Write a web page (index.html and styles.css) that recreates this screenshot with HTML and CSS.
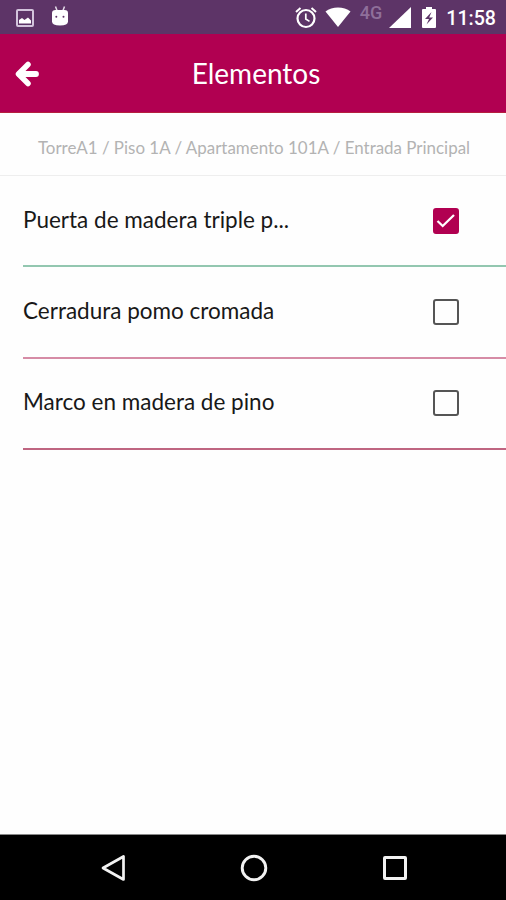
FILE: index.html
```
<!DOCTYPE html>
<html lang="es">
<head>
    <meta charset="UTF-8">
    <meta name="viewport" content="width=device-width, initial-scale=1.0">
    <title>Elementos</title>
    <link rel="stylesheet" href="styles.css">
</head>
<body>
    <div class="status-bar">
        <div class="notifications">
            <svg class="icon-picture" width="18" height="18" viewBox="0 0 18 18">
                <rect x="1" y="1" width="16" height="16" rx="1" fill="none" stroke="#d3c4dc" stroke-width="2"/>
                <path d="M3 14.500V11l3-2 2.500 2L12 8.500l3 3v3z" fill="#fff"/>
            </svg>
            <svg class="icon-android" width="18" height="20" viewBox="0 0 18 20">
                <path d="M4.500 0.500l1.500 4M13.500 0.500l-1.500 4" stroke="#e4dbe9" stroke-width="1.500"/>
                <path d="M1 7Q1 4 4.500 4h9Q17 4 17 7v8.500Q17 19.500 9 19.500T1 15.500z" fill="#fff"/>
                <circle cx="5.300" cy="10.800" r="1" fill="#5d3467"/>
                <circle cx="12.500" cy="10.800" r="1" fill="#5d3467"/>
            </svg>
        </div>
        <div class="system">
            <svg class="icon-alarm" width="22" height="22" viewBox="0 0 22 22" fill="none" stroke="#fff">
                <circle cx="11" cy="11.500" r="8.500" stroke-width="2.200"/>
                <path d="M1 5l4.500-4M21 5l-4.500-4" stroke-width="2"/>
                <path d="M10.800 6.500V12l3.700 2.400" stroke-width="1.700"/>
            </svg>
            <svg class="icon-wifi" width="26" height="20" viewBox="0 0 26 20">
                <path d="M0.500 4.500C7-1 19-1 25.500 4.500L13 20z" fill="#fff"/>
            </svg>
            <span class="network">4G</span>
            <svg class="icon-signal" width="22" height="21" viewBox="0 0 22 21">
                <path d="M22 0v21H0z" fill="#fff"/>
            </svg>
            <svg class="icon-battery" width="14" height="21" viewBox="0 0 14 21">
                <path d="M4 0h6v2H13q1 0 1 1v17q0 1-1 1H1q-1 0-1-1V3q0-1 1-1h3z" fill="#fff"/>
                <path d="M9.500 5L3 12h4L4.500 17.500 11 10.500H7.200z" fill="#5d3467"/>
            </svg>
            <span class="clock">11:58</span>
        </div>
    </div>

    <header>
        <a href="#" class="back">
            <svg width="24" height="26" viewBox="0 0 24 26" fill="none" stroke="#fff" stroke-linecap="round" stroke-linejoin="round">
                <path d="M13 3.500L3.500 13l9.500 9.500" stroke-width="5.500"/>
                <path d="M4.500 13h16.500" stroke-width="5.800"/>
            </svg>
        </a>
        <h1>Elementos</h1>
    </header>

    <div class="breadcrumb">TorreA1 / Piso 1A / Apartamento 101A / Entrada Principal</div>

    <ul class="item-list">
        <li class="item done">
            <span class="item-name">Puerta de madera triple p...</span>
            <span class="checkbox checked">
                <svg width="20" height="16" viewBox="0 0 20 16">
                    <path d="M1.500 8l5.200 5L18 2" fill="none" stroke="#fff" stroke-width="2.300"/>
                </svg>
            </span>
        </li>
        <li class="item pending">
            <span class="item-name">Cerradura pomo cromada</span>
            <span class="checkbox"></span>
        </li>
        <li class="item last">
            <span class="item-name">Marco en madera de pino</span>
            <span class="checkbox"></span>
        </li>
    </ul>

    <nav class="nav-bar">
        <svg width="26" height="28" viewBox="0 0 26 28">
            <path d="M23.500 2.500v23L3 14z" fill="none" stroke="#f2f2f2" stroke-width="2.700" stroke-linejoin="round"/>
        </svg>
        <svg width="28" height="28" viewBox="0 0 28 28">
            <circle cx="14" cy="14" r="11.800" fill="none" stroke="#f2f2f2" stroke-width="2.900"/>
        </svg>
        <svg width="26" height="26" viewBox="0 0 26 26">
            <rect x="2.500" y="2.500" width="21" height="21" rx="0.500" fill="none" stroke="#f2f2f2" stroke-width="3"/>
        </svg>
    </nav>
</body>
</html>
```
FILE: styles.css
```
* {
    margin: 0;
    padding: 0;
    box-sizing: border-box;
}

body {
    display: flex;
    flex-direction: column;
    height: 100vh;
    background: #fefefe;
    color: #181818;
    font-family: Lato, sans-serif;
    overflow: hidden;
}

svg {
    display: block;
    flex-shrink: 0;
}

/* status bar */
.status-bar {
    display: flex;
    justify-content: space-between;
    height: 34px;
    padding: 0 10px 0 16px;
    background: #5d3467;
    color: #fff;
    font-family: Roboto, sans-serif;
}

.notifications,
.system {
    display: flex;
    align-items: flex-start;
}

.icon-picture {
    margin-top: 9px;
}

.icon-android {
    margin: 6px 0 0 17px;
}

.icon-alarm,
.icon-wifi,
.icon-signal,
.icon-battery {
    margin-top: 7px;
}

.icon-wifi {
    margin-left: 8px;
}

.network {
    margin: 3px 7px 0 9px;
    color: #8f6f9a;
    font-size: 18px;
    font-weight: 500;
    line-height: 20px;
}

.icon-battery {
    margin-left: 11px;
}

.clock {
    margin: 7px 0 0 10px;
    font-size: 19.6px;
    font-weight: 500;
    line-height: 24px;
}

/* title bar */
header {
    display: grid;
    grid-template-columns: 60px 1fr 54px;
    align-items: center;
    height: 79px;
    background: #b10051;
    border-bottom: 1px solid #b5203f;
    color: #fff;
}

.back {
    padding: 2px 0 0 15px;
}

h1 {
    font-size: 28px;
    font-weight: 400;
    text-align: center;
}

.breadcrumb {
    height: 63px;
    padding-left: 2px;
    border-bottom: 1px solid #eee;
    color: #b3b3b3;
    font-size: 16.95px;
    line-height: 70px;
    text-align: center;
    white-space: nowrap;
}

/* items */
.item-list {
    flex: 1;
    padding-left: 23px;
    list-style: none;
}

.item {
    display: flex;
    justify-content: space-between;
    align-items: center;
    height: 91.5px;
    padding-right: 47px;
    border-bottom: 2px solid #d68ca6;
}

.item.done {
    height: 91px;
    border-color: #93c7b0;
}

.item.last {
    border-color: #bf6581;
}

.item-name {
    padding-bottom: 3px;
    font-size: 22.5px;
    white-space: nowrap;
}

.checkbox {
    display: flex;
    align-items: center;
    justify-content: center;
    width: 26px;
    height: 26px;
    border: 2px solid #555;
    border-radius: 3px;
}

.checkbox.checked {
    background: #b10051;
    border-color: #b10051;
}

/* bottom buttons */
.nav-bar {
    display: flex;
    justify-content: space-between;
    align-items: center;
    height: 66px;
    padding: 0 98px 0 100px;
    background: #000;
    border-top: 1px solid #888;
}
```
